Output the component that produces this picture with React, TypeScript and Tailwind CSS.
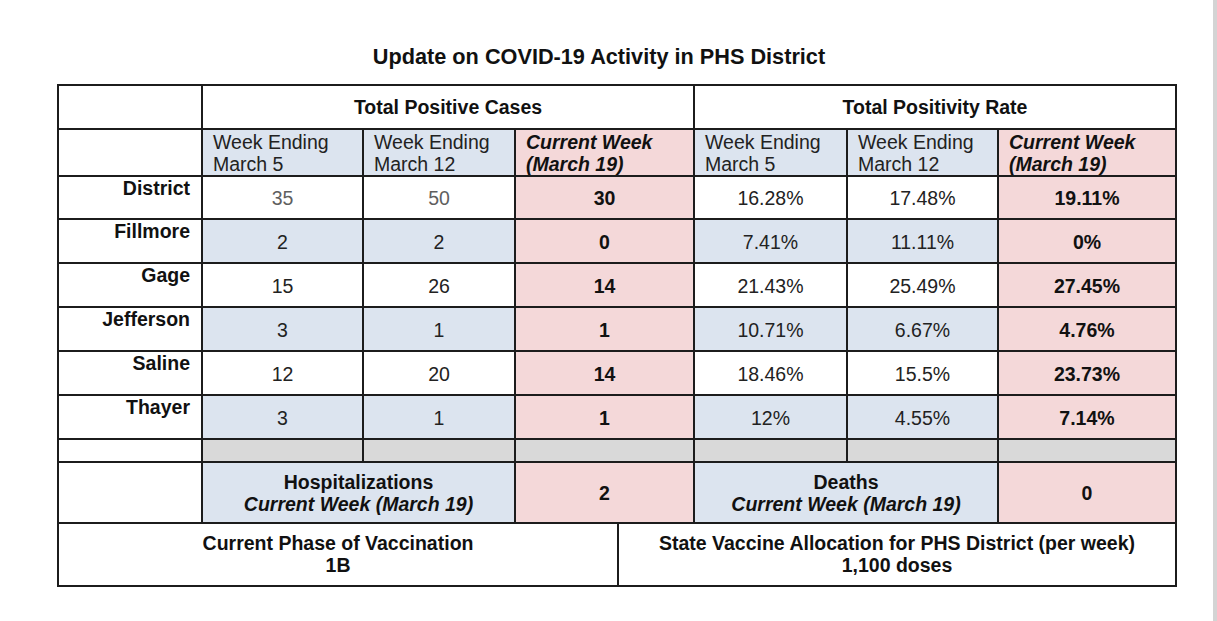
import React from "react";

const B = "#dce4ef";
const P = "#f4d8d9";
const G = "#d9d9d9";

type Row = {
  name: string;
  striped: boolean;
  c: [string, string, string];
  r: [string, string, string];
  muted?: boolean;
};

const rows: Row[] = [
  { name: "District", striped: false, c: ["35", "50", "30"], r: ["16.28%", "17.48%", "19.11%"], muted: true },
  { name: "Fillmore", striped: true, c: ["2", "2", "0"], r: ["7.41%", "11.11%", "0%"] },
  { name: "Gage", striped: false, c: ["15", "26", "14"], r: ["21.43%", "25.49%", "27.45%"] },
  { name: "Jefferson", striped: true, c: ["3", "1", "1"], r: ["10.71%", "6.67%", "4.76%"] },
  { name: "Saline", striped: false, c: ["12", "20", "14"], r: ["18.46%", "15.5%", "23.73%"] },
  { name: "Thayer", striped: true, c: ["3", "1", "1"], r: ["12%", "4.55%", "7.14%"] },
];

const cell = "border-r-2 border-b-2 border-[#1c1c1c]";

function Val({ v, bg, bold, muted }: { v: string; bg: string; bold?: boolean; muted?: boolean }) {
  return (
    <div
      className={`${cell} flex items-center justify-center pt-[1px] ${bold ? "font-bold text-[#111]" : muted ? "text-[#5f5f5f]" : "text-[#222]"}`}
      style={{ backgroundColor: bg }}
    >
      {v}
    </div>
  );
}

function SubHead({ a, b, current }: { a: string; b: string; current?: boolean }) {
  return (
    <div
      className={`${cell} flex flex-col justify-center pl-[10px] ${current ? "font-bold italic text-[#111]" : "text-[#222]"}`}
      style={{ backgroundColor: current ? P : B }}
    >
      <div>{a}</div>
      <div>{b}</div>
    </div>
  );
}

export default function App() {
  return (
    <div
      className="flex h-[621px] w-[1217px] bg-white text-[19.5px] leading-[22px]"
      style={{ fontFamily: '"Liberation Sans", Arial, sans-serif' }}
    >
      <div className="flex-1 pt-[45px]">
        <div className="w-[1198px] text-center text-[21.7px] font-bold leading-[24px] text-[#111]">
          Update on COVID-19 Activity in PHS District
        </div>
        <div className="ml-[57px] mt-[15px] grid w-fit grid-cols-[144px_161px_152px_179px_153px_151px_178px] grid-rows-[44px_47px_43px_44px_44px_44px_44px_44px_23px_61px_63px] border-l-2 border-t-2 border-[#1c1c1c]">
          {/* header */}
          <div className={`${cell}`} />
          <div className={`${cell} col-span-3 flex items-center justify-center font-bold text-[#111]`}>
            Total Positive Cases
          </div>
          <div className={`${cell} col-span-3 flex items-center justify-center font-bold text-[#111]`}>
            Total Positivity Rate
          </div>

          {/* sub header */}
          <div className={`${cell}`} />
          <SubHead a="Week Ending" b="March 5" />
          <SubHead a="Week Ending" b="March 12" />
          <SubHead a="Current Week" b="(March 19)" current />
          <SubHead a="Week Ending" b="March 5" />
          <SubHead a="Week Ending" b="March 12" />
          <SubHead a="Current Week" b="(March 19)" current />

          {rows.map((r) => {
            const bg = r.striped ? B : "#ffffff";
            return (
              <React.Fragment key={r.name}>
                <div className={`${cell} pr-[11px] text-right font-bold text-[#111]`}>{r.name}</div>
                <Val v={r.c[0]} bg={bg} muted={r.muted} />
                <Val v={r.c[1]} bg={bg} muted={r.muted} />
                <Val v={r.c[2]} bg={P} bold />
                <Val v={r.r[0]} bg={bg} />
                <Val v={r.r[1]} bg={bg} />
                <Val v={r.r[2]} bg={P} bold />
              </React.Fragment>
            );
          })}

          {/* gray row */}
          <div className={`${cell}`} />
          {[0, 1, 2, 3, 4, 5].map((i) => (
            <div key={i} className={`${cell}`} style={{ backgroundColor: G }} />
          ))}

          {/* hospitalizations / deaths */}
          <div className={`${cell}`} />
          <div
            className={`${cell} col-span-2 flex flex-col items-center justify-center font-bold text-[#111]`}
            style={{ backgroundColor: B }}
          >
            <div>Hospitalizations</div>
            <div className="italic">Current Week (March 19)</div>
          </div>
          <div className={`${cell} flex items-center justify-center font-bold text-[#111]`} style={{ backgroundColor: P }}>
            2
          </div>
          <div
            className={`${cell} col-span-2 flex flex-col items-center justify-center font-bold text-[#111]`}
            style={{ backgroundColor: B }}
          >
            <div>Deaths</div>
            <div className="italic">Current Week (March 19)</div>
          </div>
          <div className={`${cell} flex items-center justify-center font-bold text-[#111]`} style={{ backgroundColor: P }}>
            0
          </div>

          {/* vaccination */}
          <div className="col-span-7 flex">
            <div className={`${cell} flex w-[560px] flex-col items-center justify-center pb-[2px] font-bold text-[#111]`}>
              <div>Current Phase of Vaccination</div>
              <div>1B</div>
            </div>
            <div className={`${cell} flex flex-1 flex-col items-center justify-center pb-[2px] font-bold text-[#111]`}>
              <div>State Vaccine Allocation for PHS District (per week)</div>
              <div>1,100 doses</div>
            </div>
          </div>
        </div>
      </div>
      <div className="h-full w-[4px] bg-[#d4d4d4]" />
    </div>
  );
}
